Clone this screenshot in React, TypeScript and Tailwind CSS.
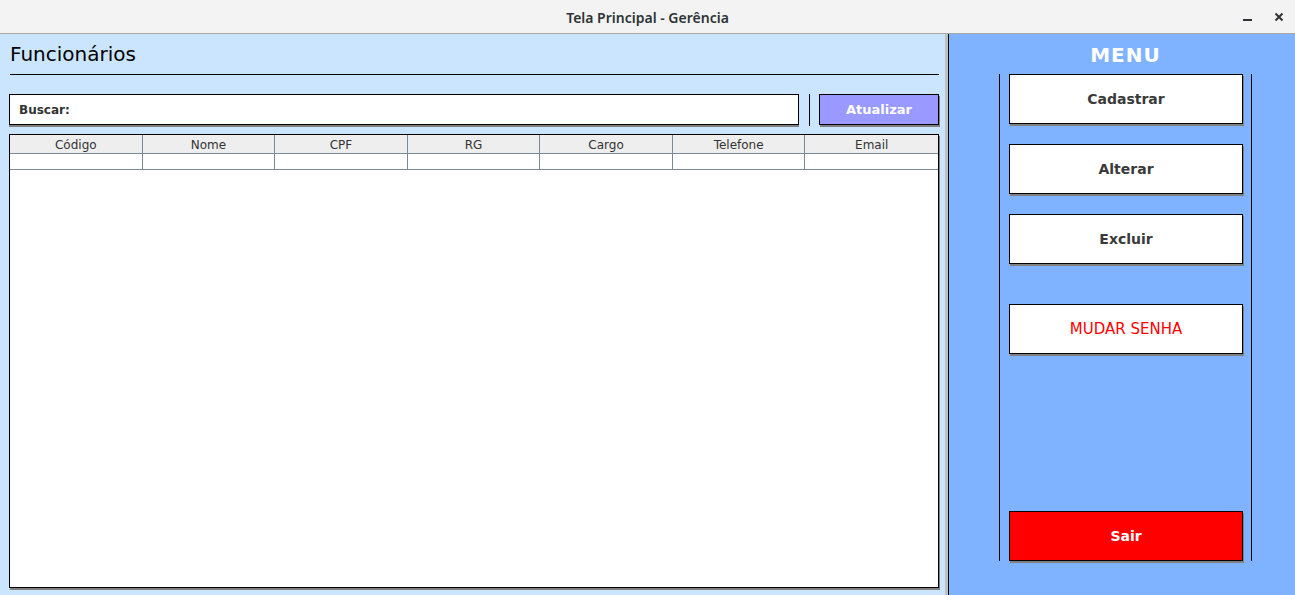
import React from 'react'

const columns = ['Código', 'Nome', 'CPF', 'RG', 'Cargo', 'Telefone', 'Email']

function MenuButton({ label, className, textClass }: { label: string; className?: string; textClass?: string }) {
  return (
    <button
      className={`h-[50px] w-[234px] ml-[9px] border border-black shadow-[1px_2px_0_#808080] ${
        textClass ?? 'text-[14px] font-bold text-[#3a3a3a] bg-white'
      } ${className ?? ''}`}
    >
      {label}
    </button>
  )
}

export default function App() {
  return (
    <div
      className="w-[1295px] h-[595px] flex flex-col overflow-hidden bg-[#f3f3f3]"
      style={{ fontFamily: '"DejaVu Sans", sans-serif' }}
    >
      {/* window title bar */}
      <div className="h-[34px] shrink-0 flex items-center relative border-b border-[#a8a8a8] bg-[#f3f3f3]">
        <div
          className="flex-1 text-center text-[14px] font-semibold text-[#2e3436] pt-[1px]"
          style={{ fontFamily: '"Noto Sans", "Open Sans", sans-serif' }}
        >
          Tela Principal - Gerência
        </div>
        <div className="absolute right-[10px] top-0 h-[33px] flex items-center gap-[22px]">
          <div className="w-[9px] h-[2px] bg-[#2e3436] mt-[6px]" />
          <svg width="10" height="10" viewBox="0 0 10 10" className="mr-[1px]">
            <path d="M1.5 1.5L8.5 8.5M8.5 1.5L1.5 8.5" stroke="#2e3436" strokeWidth="2" />
          </svg>
        </div>
      </div>

      <div className="flex-1 flex">
        {/* left panel */}
        <div className="w-[945px] bg-[#cce5ff] pl-[9px] flex flex-col">
          <div className="h-[40px] pt-[6px] pl-[1px] text-[20px] leading-[28px] text-black">Funcionários</div>
          <div className="h-px w-[929px] ml-[1px] bg-black" />

          <div className="mt-[19px] flex items-center h-[31px]">
            <div className="w-[790px] h-[31px] bg-white border border-black shadow-[0_2px_0_#7f7f7f] flex items-center pl-[9px]">
              <span className="text-[12px] font-bold text-[#333333]">Buscar:</span>
            </div>
            <div className="w-px h-[32px] bg-black ml-[10px]" />
            <button className="ml-[9px] w-[120px] h-[31px] bg-[#9999ff] border border-black shadow-[1px_2px_0_#7f7f7f] text-white text-[13px] font-bold">
              Atualizar
            </button>
          </div>

          <div className="mt-[9px] w-[930px] h-[454px] bg-white border border-black shadow-[1px_2px_0_#808080]">
            <div className="grid grid-cols-7 h-[19px] bg-[#eeeeee] border-b border-[#7a8a99]">
              {columns.map((c, i) => (
                <div
                  key={c}
                  className={`text-center text-[12px] leading-[18px] pt-[1px] text-[#333333] ${
                    i < columns.length - 1 ? 'border-r border-[#7a8a99]' : ''
                  }`}
                >
                  {c}
                </div>
              ))}
            </div>
            <div className="grid grid-cols-7 h-[16px] border-b border-[#7a8a99]">
              {columns.map((c, i) => (
                <div key={c} className={i < columns.length - 1 ? 'border-r border-[#7a8a99]' : ''} />
              ))}
            </div>
          </div>
        </div>

        <div className="w-[3px] bg-[#bfbfbf]" />

        {/* right panel */}
        <div className="flex-1 bg-[#80b3ff] border-l border-black flex flex-col">
          <div className="h-[40px] pt-[9px] ml-[50px] w-[253px] text-center text-[20px] leading-[24px] font-bold text-white tracking-[1px]">
            MENU
          </div>
          <div className="ml-[50px] w-[253px] h-[487px] border-x border-black flex flex-col">
            <MenuButton label="Cadastrar" />
            <MenuButton label="Alterar" className="mt-[20px]" />
            <MenuButton label="Excluir" className="mt-[20px]" />
            <MenuButton label="MUDAR SENHA" className="mt-[40px]" textClass="text-[15px] text-[#ff0000] bg-white" />
            <MenuButton label="Sair" className="mt-auto" textClass="text-[14px] font-bold text-white bg-[#ff0000]" />
          </div>
        </div>
      </div>
    </div>
  )
}
